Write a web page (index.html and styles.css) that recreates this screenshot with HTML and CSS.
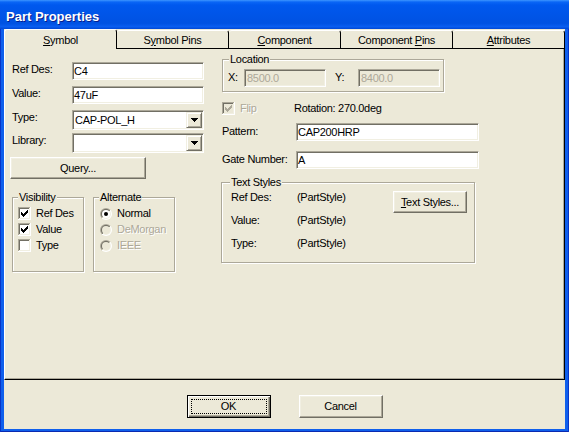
FILE: index.html
```html
<!DOCTYPE html>
<html>
<head>
<meta charset="utf-8">
<title>Part Properties</title>
<link rel="stylesheet" href="styles.css">
</head>
<body>
<svg class="defs" width="0" height="0" aria-hidden="true">
  <defs>
    <linearGradient id="rgO" x1="0" y1="0" x2="1" y2="1"><stop offset="0.5" stop-color="#aca899"/><stop offset="0.5" stop-color="#ffffff"/></linearGradient>
    <linearGradient id="rgI" x1="0" y1="0" x2="1" y2="1"><stop offset="0.5" stop-color="#716f64"/><stop offset="0.5" stop-color="#f1efe2"/></linearGradient>
    <symbol id="cb-on" viewBox="0 0 13 13" shape-rendering="crispEdges">
      <rect width="13" height="13" fill="#fff"/>
      <rect width="12" height="1" fill="#aca899"/><rect width="1" height="12" fill="#aca899"/>
      <rect x="1" y="1" width="10" height="1" fill="#716f64"/><rect x="1" y="1" width="1" height="10" fill="#716f64"/>
      <rect x="1" y="11" width="11" height="1" fill="#f1efe2"/><rect x="11" y="1" width="1" height="11" fill="#f1efe2"/>
      <rect x="2" y="2" width="9" height="9" fill="#fff"/>
      <path d="M3 5h1v3H3zM4 6h1v3H4zM5 7h1v3H5zM6 6h1v3H6zM7 5h1v3H7zM8 4h1v3H8zM9 3h1v3H9z" fill="#000"/>
    </symbol>
    <symbol id="cb-off" viewBox="0 0 13 13" shape-rendering="crispEdges">
      <rect width="13" height="13" fill="#fff"/>
      <rect width="12" height="1" fill="#aca899"/><rect width="1" height="12" fill="#aca899"/>
      <rect x="1" y="1" width="10" height="1" fill="#716f64"/><rect x="1" y="1" width="1" height="10" fill="#716f64"/>
      <rect x="1" y="11" width="11" height="1" fill="#f1efe2"/><rect x="11" y="1" width="1" height="11" fill="#f1efe2"/>
      <rect x="2" y="2" width="9" height="9" fill="#fff"/>
    </symbol>
    <symbol id="cb-dis" viewBox="0 0 13 13" shape-rendering="crispEdges">
      <rect width="13" height="13" fill="#fff"/>
      <rect width="12" height="1" fill="#aca899"/><rect width="1" height="12" fill="#aca899"/>
      <rect x="1" y="1" width="10" height="1" fill="#716f64"/><rect x="1" y="1" width="1" height="10" fill="#716f64"/>
      <rect x="1" y="11" width="11" height="1" fill="#f1efe2"/><rect x="11" y="1" width="1" height="11" fill="#f1efe2"/>
      <rect x="2" y="2" width="9" height="9" fill="#ece9d8"/>
      <path d="M3 5h1v3H3zM4 6h1v3H4zM5 7h1v3H5zM6 6h1v3H6zM7 5h1v3H7zM8 4h1v3H8zM9 3h1v3H9z" fill="#aca899"/>
    </symbol>
    <symbol id="rb-on" viewBox="0 0 12 12">
      <circle cx="6" cy="6" r="6" fill="url(#rgO)"/>
      <circle cx="6" cy="6" r="5" fill="url(#rgI)"/>
      <circle cx="6" cy="6" r="4" fill="#fff"/>
      <circle cx="6" cy="6" r="2" fill="#000"/>
    </symbol>
    <symbol id="rb-dis" viewBox="0 0 12 12">
      <circle cx="6" cy="6" r="6" fill="url(#rgO)"/>
      <circle cx="6" cy="6" r="5" fill="url(#rgI)"/>
      <circle cx="6" cy="6" r="4" fill="#ece9d8"/>
    </symbol>
    <symbol id="arrow" viewBox="0 0 7 4" shape-rendering="crispEdges">
      <path d="M0 0h7v1H0zM1 1h5v1H1zM2 2h3v1H2zM3 3h1v1H3z" fill="#000"/>
    </symbol>
  </defs>
</svg>

<div class="window">
  <div class="titlebar"><span class="title">Part Properties</span></div>
  <div class="client">
    <div class="tabs">
      <div class="tab active"><u>S</u>ymbol</div>
      <div class="tab">S<u>y</u>mbol Pins</div>
      <div class="tab"><u>C</u>omponent</div>
      <div class="tab">Component <u>P</u>ins</div>
      <div class="tab"><u>A</u>ttributes</div>
    </div>

    <div class="panel">
      <div class="col-left">
        <div class="field-row r1"><span class="field-label">Ref Des:</span><div class="edit">C4</div></div>
        <div class="field-row r2"><span class="field-label">Value:</span><div class="edit">47uF</div></div>
        <div class="field-row r3"><span class="field-label">Type:</span>
          <div class="combo"><span class="combo-text">CAP-POL_H</span><span class="drop"><svg class="arrow"><use href="#arrow"/></svg></span></div>
        </div>
        <div class="field-row r4"><span class="field-label">Library:</span>
          <div class="combo"><span class="combo-text"></span><span class="drop"><svg class="arrow"><use href="#arrow"/></svg></span></div>
        </div>
        <div class="btn query">Query...</div>

        <div class="groups">
          <div class="group vis">
            <div class="group-label">Visibility</div>
            <div class="opt"><svg class="cb"><use href="#cb-on"/></svg><span>Ref Des</span></div>
            <div class="opt"><svg class="cb"><use href="#cb-on"/></svg><span>Value</span></div>
            <div class="opt"><svg class="cb"><use href="#cb-off"/></svg><span>Type</span></div>
          </div>
          <div class="group alt">
            <div class="group-label">Alternate</div>
            <div class="opt"><svg class="rb"><use href="#rb-on"/></svg><span>Normal</span></div>
            <div class="opt disabled"><svg class="rb"><use href="#rb-dis"/></svg><span>DeMorgan</span></div>
            <div class="opt disabled"><svg class="rb"><use href="#rb-dis"/></svg><span>IEEE</span></div>
          </div>
        </div>
      </div>

      <div class="col-right">
        <div class="group loc">
          <div class="group-label">Location</div>
          <div class="loc-row">
            <span class="xy-label">X:</span><div class="edit small dis">8500.0</div>
            <span class="xy-label y">Y:</span><div class="edit small dis">8400.0</div>
          </div>
        </div>

        <div class="flip-row">
          <svg class="cb"><use href="#cb-dis"/></svg><span class="flip disabled-text">Flip</span><span>Rotation: 270.0deg</span>
        </div>

        <div class="prow pattern"><span class="plabel">Pattern:</span><div class="edit wide">CAP200HRP</div></div>
        <div class="prow gate"><span class="plabel">Gate Number:</span><div class="edit wide">A</div></div>

        <div class="group ts">
          <div class="group-label">Text Styles</div>
          <div class="ts-body">
            <div class="ts-grid">
              <span>Ref Des:</span><span>(PartStyle)</span>
              <span>Value:</span><span>(PartStyle)</span>
              <span>Type:</span><span>(PartStyle)</span>
            </div>
            <div class="btn ts-btn"><span><u>T</u>ext Styles...</span></div>
          </div>
        </div>
      </div>
    </div>

    <div class="footer">
      <div class="btn default push"><span class="focus">OK</span></div>
      <div class="btn push">Cancel</div>
    </div>
  </div>
</div>
</body>
</html>
```
FILE: styles.css
```css
* { box-sizing: border-box; }
html, body { margin: 0; padding: 0; }
body {
  width: 569px; height: 432px; overflow: hidden;
  background: #0d5ae8;
  font-family: "Liberation Sans", Arial, sans-serif;
  font-size: 11px; letter-spacing: -0.3px; line-height: 13px; color: #000;
}
.defs { display: block; width: 0; height: 0; overflow: hidden; }

.window {
  width: 569px; height: 432px;
  display: flex; flex-direction: column;
  background: #0f5fec;
  box-shadow: inset 1px 0 0 #0834c8, inset -1px 0 0 #0834c8, inset 0 -1px 0 #0a2ab0;
}
.titlebar {
  flex: none; height: 29px;
  display: flex; align-items: center;
  padding: 4px 0 0 6px;
  background: linear-gradient(to bottom, #3d95ff 0, #0a66f6 2px, #0058ee 5px, #0055e8 50%, #0052e2 80%, #0a5ef0 92%, #0048d4 100%);
}
.title {
  color: #fff; font-weight: bold; font-size: 13px; letter-spacing: 0;
  text-shadow: 1px 1px 0 #0a1e8c;
}
.client {
  flex: 1; margin: 0 4px 3px;
  background: #ece9d8;
  display: flex; flex-direction: column;
}

/* tabs */
.tabs { flex: none; height: 20px; display: flex; }
.tab {
  flex: 1; margin-top: 1px;
  border-top: 1px solid #fff; border-right: 1px solid #000; border-bottom: 1px solid #000;
  border-radius: 3px 3px 0 0;
  text-align: center; padding-top: 3px; white-space: nowrap;
}
.tab.active { margin-top: 0; border-left: 1px solid #fff; border-bottom: none; padding-top: 4px; }

.panel {
  flex: none; height: 331px; display: flex;
  border-left: 1px solid #fff; border-right: 1px solid #000; border-bottom: 1px solid #000;
  box-shadow: inset -1px -1px 0 #aca899;
}

/* left column */
.col-left { width: 194px; margin-left: 7px; padding-top: 13px; display: flex; flex-direction: column; align-items: flex-start; }
.field-row { display: flex; align-items: flex-start; }
.r2 { margin-top: 6px; }
.r3 { margin-top: 6px; }
.r4 { margin-top: 3px; }
.field-label { width: 60px; margin-top: 1px; white-space: nowrap; }

.edit {
  width: 132px; height: 18px; background: #fff;
  border: 1px solid; border-color: #aca899 #fff #fff #aca899;
  box-shadow: inset 1px 1px 0 #716f64, inset -1px -1px 0 #f1efe2;
  padding: 1px 0 0 1px; line-height: 14px; white-space: nowrap; overflow: hidden;
}
.edit.small { width: 82px; }
.edit.wide { width: 183px; }
.edit.dis { background: #ece9d8; color: #aca899; padding-left: 2px; }

.combo {
  width: 132px; height: 20px; background: #fff;
  border: 1px solid; border-color: #aca899 #fff #fff #aca899;
  box-shadow: inset 1px 1px 0 #716f64, inset -1px -1px 0 #f1efe2;
  padding: 1px; display: flex; align-items: center;
}
.combo-text { flex: 1; padding-left: 1px; white-space: nowrap; }
.drop {
  width: 16px; height: 16px; flex: none;
  display: flex; align-items: center; justify-content: center;
  background: #ece9d8;
  border: 1px solid; border-color: #f1efe2 #716f64 #716f64 #f1efe2;
  box-shadow: inset 1px 1px 0 #fff, inset -1px -1px 0 #aca899;
}
.arrow { width: 7px; height: 4px; display: block; }

.btn {
  display: flex; align-items: center; justify-content: center;
  background: #ece9d8;
  border: 1px solid; border-color: #fff #716f64 #716f64 #fff;
  box-shadow: inset -1px -1px 0 #aca899, inset 1px 1px 0 #f1efe2;
  white-space: nowrap;
}
.query { width: 136px; height: 22px; margin: 4px 0 0 -2px; }

/* group boxes */
.group {
  border: 1px solid #aca899;
  box-shadow: inset 1px 1px 0 #fff, 1px 1px 0 #fff;
  display: flex; flex-direction: column; align-items: flex-start;
}
.group-label {
  margin: -7px 0 0 5px; padding: 0 1px;
  background: #ece9d8; line-height: 13px; white-space: nowrap;
}
.groups { display: flex; gap: 9px; margin-top: 18px; }
.vis { width: 72px; height: 75px; }
.alt { width: 82px; height: 75px; }
.opt { display: flex; align-items: center; gap: 5px; height: 13px; margin-top: 3px; white-space: nowrap; }
.vis .opt { margin-left: 5px; }
.alt .opt { margin-left: 6px; }
.cb { width: 13px; height: 13px; display: block; flex: none; }
.rb { width: 12px; height: 12px; display: block; flex: none; }
.disabled span, .disabled-text { color: #aca899; text-shadow: 1px 1px 0 #fff; }

/* right column */
.col-right { width: 258px; margin-left: 15px; padding-top: 10px; display: flex; flex-direction: column; align-items: flex-start; }
.loc { width: 222px; height: 33px; margin-left: 1px; }
.loc .group-label { margin-left: 6px; }
.loc-row { display: flex; align-items: flex-start; margin: 3px 0 0 5px; }
.xy-label { width: 16px; margin-top: 2px; }
.xy-label.y { width: 23px; margin-left: 9px; }

.flip-row { display: flex; align-items: center; height: 13px; margin: 10px 0 0 1px; white-space: nowrap; }
.flip-row .cb { margin-right: 5px; }
.flip { width: 54px; }

.prow { display: flex; align-items: flex-start; margin-left: 1px; }
.pattern { margin-top: 8px; }
.gate { margin-top: 10px; }
.plabel { width: 74px; margin-top: 2px; white-space: nowrap; }

.ts { width: 254px; height: 81px; margin-top: 13px; }
.ts .group-label { margin: -7px 0 -3px 8px; }
.ts-body { display: flex; width: 100%; }
.ts-grid {
  display: grid; grid-template-columns: 66px auto; grid-auto-rows: 23px;
  align-items: center; padding-left: 9px; white-space: nowrap;
}
.ts-btn { width: 74px; height: 22px; margin: 5px 7px 0 auto; }

/* footer */
.footer { flex: 1; display: flex; justify-content: center; gap: 28px; padding-top: 15px; }
.push { width: 84px; height: 23px; }
.btn.default {
  border: 1px solid #000;
  box-shadow: inset 1px 1px 0 #fff, inset -1px -1px 0 #716f64, inset -2px -2px 0 #aca899;
  padding: 3px; align-items: stretch;
}
.focus {
  flex: 1; border: 1px dotted #000;
  display: flex; align-items: center; justify-content: center;
}
```
